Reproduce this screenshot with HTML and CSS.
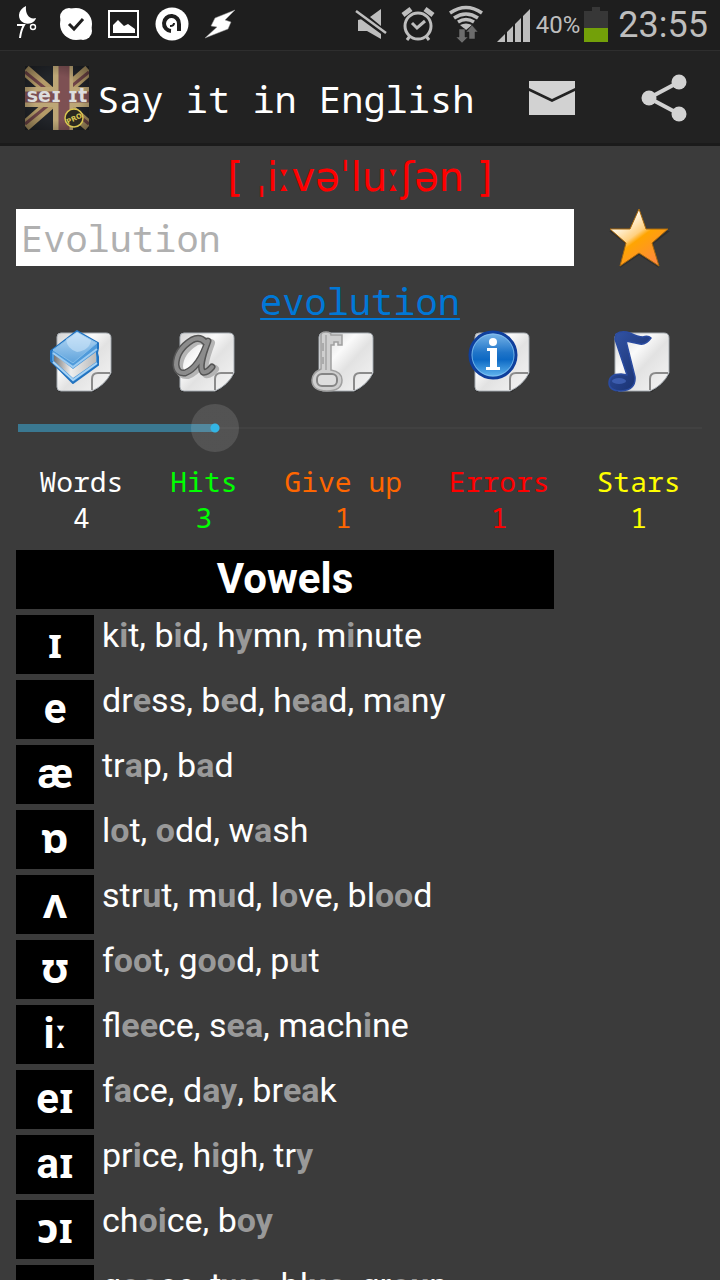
FILE: index.html
```html
<!DOCTYPE html>
<html lang="en">
<head>
    <meta charset="UTF-8">
    <meta name="viewport" content="width=device-width, initial-scale=1.0">
    <title>Say it in English</title>
    <link rel="stylesheet" href="styles.css">
</head>
<body>
    <!-- shared shapes -->
    <svg class="defs" width="0" height="0" aria-hidden="true">
        <defs>
            <linearGradient id="paperFill" x1="0" y1="0" x2="1" y2="1">
                <stop offset="0" stop-color="#d4d4d4"/>
                <stop offset="0.35" stop-color="#fafafa"/>
                <stop offset="0.55" stop-color="#e2e2e2"/>
                <stop offset="1" stop-color="#f6f6f6"/>
            </linearGradient>
            <linearGradient id="starFill" x1="0.2" y1="0.1" x2="0.8" y2="0.9">
                <stop offset="0.1" stop-color="#fffdf5"/>
                <stop offset="0.42" stop-color="#ffd080"/>
                <stop offset="0.52" stop-color="#ffa502"/>
                <stop offset="1" stop-color="#ff8a3c"/>
            </linearGradient>
            <linearGradient id="bookFill" x1="0" y1="0" x2="0" y2="1">
                <stop offset="0" stop-color="#b9daf5"/>
                <stop offset="1" stop-color="#5fa3dc"/>
            </linearGradient>
            <linearGradient id="pagesFill" x1="0" y1="0" x2="1" y2="0">
                <stop offset="0" stop-color="#777"/>
                <stop offset="0.4" stop-color="#eee"/>
                <stop offset="1" stop-color="#bbb"/>
            </linearGradient>
            <linearGradient id="infoFill" x1="0" y1="0" x2="0" y2="1">
                <stop offset="0" stop-color="#7db8ea"/>
                <stop offset="0.45" stop-color="#1f74c8"/>
                <stop offset="0.6" stop-color="#0d69c4"/>
                <stop offset="1" stop-color="#69bcf2"/>
            </linearGradient>
            <linearGradient id="noteFill" x1="0" y1="0" x2="1" y2="1">
                <stop offset="0" stop-color="#3456a8"/>
                <stop offset="1" stop-color="#142a66"/>
            </linearGradient>
            <radialGradient id="flagShade" r="0.7">
                <stop offset="0.5" stop-color="#000" stop-opacity="0"/>
                <stop offset="1" stop-color="#000" stop-opacity="0.4"/>
            </radialGradient>
            <g id="paper">
                <path d="M12 5h46q5 0 5 5v34L45 62H12q-4 0-4-4V9q0-4 4-4z" fill="#222" opacity="0.6"/>
                <path d="M12 3h45q5 0 5 5v35q-6 12-19 18H12q-4 0-4-4V7q0-4 4-4z" fill="url(#paperFill)" stroke="#a9afb5"/>
                <path d="M43 60V49q0-6 6-6h12" fill="none" stroke="#8b8b8b" stroke-width="2"/>
            </g>
        </defs>
    </svg>

    <div class="app">
        <div class="status-bar">
            <svg class="status-icon" viewBox="4 0 48 50">
                <path d="M26 6C17 10 17 20 24 23c6 2 11-1 12-5-6 2-11-3-10-12z" fill="#fff"/>
                <path d="M17 25h7q-3 5-4 13" fill="none" stroke="#fff" stroke-width="2"/>
                <circle cx="33" cy="27" r="2.500" fill="none" stroke="#fff" stroke-width="1.400"/>
            </svg>
            <svg class="status-icon" viewBox="52 0 48 50">
                <g fill="#fff">
                    <circle cx="76" cy="24" r="16"/>
                    <circle cx="69" cy="17" r="9"/>
                    <circle cx="83" cy="31" r="9"/>
                </g>
                <path d="M69 24l5 5 9-10" fill="none" stroke="#1e1e1e" stroke-width="3"/>
            </svg>
            <svg class="status-icon" viewBox="100 0 48 50">
                <rect x="109" y="11" width="29" height="26" fill="none" stroke="#fff" stroke-width="2"/>
                <path d="M113 33v-8l5-5 6 6 4-2 7 5v4z" fill="#fff"/>
            </svg>
            <svg class="status-icon" viewBox="148 0 48 50">
                <circle cx="172" cy="24" r="16.500" fill="#fff"/>
                <path d="M171 31a7.500 7.500 0 1 1 8-7v7" fill="none" stroke="#1e1e1e" stroke-width="4"/>
                <path d="M170 26q4 0 4-3" fill="none" stroke="#1e1e1e" stroke-width="2"/>
            </svg>
            <svg class="status-icon" viewBox="196 0 48 50">
                <path d="M235 10l-20 8-4 8 6 1-12 11 23-9 3-7-6-2z" fill="#fff" stroke="#999" stroke-width="0.500"/>
            </svg>

            <svg class="status-icon push" viewBox="344 0 48 50">
                <path d="M358 20v11h9l14 8V33L362 19zM370 17l11-8v17z" fill="#bebebe"/>
                <path d="M356 11l30 22" stroke="#bebebe" stroke-width="2.500"/>
                <path d="M355 14l30 22" stroke="#1e1e1e" stroke-width="1.500"/>
            </svg>
            <svg class="status-icon" viewBox="392 0 48 50">
                <g fill="none" stroke="#bebebe">
                    <circle cx="418" cy="26" r="13" stroke-width="3"/>
                    <path d="M412 23l5 5 8-7" stroke-width="3"/>
                    <path d="M403 15l8-6M433 15l-8-6" stroke-width="5"/>
                    <path d="M410 36l-3 4M426 36l3 4" stroke-width="3"/>
                </g>
            </svg>
            <svg class="status-icon" viewBox="440 0 48 50">
                <g fill="none" stroke="#bebebe" stroke-width="3.500">
                    <path d="M450 13q16-11 32 0M454 18q12-8 24 0M458 22q8-5 16 0"/>
                </g>
                <path d="M460 25q6-3 12 0l-6 5z" fill="#bebebe"/>
                <path d="M459 29h6v8h3l-6 6-6-6h3zM469 39h6v-7h3l-6-7-6 7h3z" fill="#6c6c6c" stroke="#1e1e1e" stroke-width="0.500"/>
            </svg>
            <svg class="status-icon" viewBox="488 0 48 50">
                <path d="M497 42l8-8v8zM507 42V32l6-6v16zM515 42V24l6-6v24zM523 42V16l7-7v33z" fill="#bebebe"/>
            </svg>
            <span class="battery-text">40%</span>
            <svg class="battery" viewBox="0 0 24 50">
                <path d="M0 11h8V7h8v4h8v17H0z" fill="#373737"/>
                <path d="M0 28h24v14H0z" fill="#73a009"/>
            </svg>
            <span class="clock">23:55</span>
        </div>

        <header class="action-bar">
            <svg class="logo" viewBox="0 0 64 64">
                <rect width="64" height="64" fill="#22252a"/>
                <path d="M0 4L64 60M64 4L0 60" stroke="#b49b68" stroke-width="11"/>
                <path d="M0 6L64 58M64 6L0 58" stroke="#704548" stroke-width="3"/>
                <path d="M38 0v64M0 31h64" stroke="#bda676" stroke-width="20"/>
                <path d="M39 0v64M0 31h64" stroke="#7d5053" stroke-width="11"/>
                <rect width="64" height="64" fill="url(#flagShade)"/>
                <text class="logo-text" x="32" y="36" text-anchor="middle">seɪ ɪt</text>
                <circle cx="49" cy="52" r="9" fill="#2b2920" stroke="#d8c450" stroke-width="1.500"/>
                <text class="logo-pro" x="49" y="55" text-anchor="middle" transform="rotate(-25 49 52)">PRO</text>
            </svg>
            <h1 class="title">Say it in English</h1>
            <button class="action" type="button" aria-label="Send mail">
                <svg width="48" height="48" viewBox="528 74 48 48">
                    <path d="M529 81h46v7l-23 11-23-11zM529 91l23 11 23-11v24h-46z" fill="#d2d2d2"/>
                </svg>
            </button>
            <button class="action" type="button" aria-label="Share">
                <svg width="48" height="48" viewBox="640 74 48 48">
                    <path d="M679 82l-30 16 30 16" fill="none" stroke="#d2d2d2" stroke-width="4"/>
                    <circle cx="679" cy="82" r="7.500" fill="#d2d2d2"/>
                    <circle cx="649" cy="98" r="7.500" fill="#d2d2d2"/>
                    <circle cx="679" cy="114" r="7.500" fill="#d2d2d2"/>
                </svg>
            </button>
        </header>

        <main class="content">
            <div class="phonetic">[ ˌiːvəˈluːʃən ]</div>

            <div class="word-row">
                <input class="word" type="text" placeholder="Evolution" aria-label="Word">
                <button class="star" type="button" aria-label="Star this word">
                    <svg width="64" height="64" viewBox="0 0 64 64">
                        <path d="M32 4l8 21h23L45 39l7 23-20-13-19 13 7-23L2 25h22z" fill="#222" opacity="0.5"/>
                        <path d="M32 3l7 20h22L45 37l7 23-20-13-19 13 6-23L3 23h20z" fill="url(#starFill)" stroke="#a8680c" stroke-linejoin="round"/>
                    </svg>
                </button>
            </div>

            <div class="answer"><a href="#">evolution</a></div>

            <div class="panel">
                <button class="tool" type="button" aria-label="Dictionary">
                    <svg width="64" height="64" viewBox="0 0 64 64">
                        <use href="#paper"/>
                        <path d="M28 1l21 12v5l-1 5 1 4v8L24 53 2 31V21z" fill="#4f9ada" stroke="#2273c0" stroke-width="2" stroke-linejoin="round"/>
                        <path d="M5 24l19 15 23-17v10L24 48 5 31z" fill="url(#pagesFill)"/>
                        <path d="M28 2l20 11-24 20L4 20z" fill="url(#bookFill)" stroke="#84bdea"/>
                        <path d="M4 23l20 14 24-18" fill="none" stroke="#9dccf2" stroke-width="2"/>
                        <path d="M4 32l20 18 24-17" fill="none" stroke="#a9d3f4" stroke-width="2"/>
                        <path d="M17 9l11-7 14 8q-1 10-14 12-10-3-11-13z" fill="#d8ecfb" opacity="0.5"/>
                    </svg>
                </button>
                <button class="tool" type="button" aria-label="Letters">
                    <svg width="64" height="64" viewBox="0 0 64 64">
                        <use href="#paper"/>
                        <!-- script letter, drawn as one brush stroke -->
                        <g fill="none" stroke-linecap="round" stroke-linejoin="round">
                            <path d="M33 12Q28 6 20 10 4 20 4 35q1 9 9 8 14-5 23-32-10 26-5 31 4 1 9-5" stroke="#b5b5b5" stroke-width="8" transform="translate(3 2)"/>
                            <path d="M33 12Q28 6 20 10 4 20 4 35q1 9 9 8 14-5 23-32-10 26-5 31 4 1 9-5" stroke="#555" stroke-width="7"/>
                            <path d="M33 12Q28 6 20 10 4 20 4 35q1 9 9 8 14-5 23-32-10 26-5 31 4 1 9-5" stroke="#8c8c8c" stroke-width="4"/>
                        </g>
                    </svg>
                </button>
                <button class="tool" type="button" aria-label="Key">
                    <svg width="64" height="64" viewBox="0 0 64 64">
                        <use href="#paper"/>
                        <path d="M10 5q0-3 5-3t5 3h11v10h-4v-3h-4v3h-3v25q11 2 11 10 0 11-15 11T1 50q0-7 9-11z" fill="#cfcfcf" stroke="#a0a0a0" stroke-width="1.500"/>
                        <path d="M15 5v35" stroke="#b0b0b0" stroke-width="2"/>
                        <path d="M12 13v8M12 27v7" stroke="#888"/>
                        <rect x="6" y="44" width="20" height="12" rx="5" fill="#dedede" stroke="#858585" stroke-width="2"/>
                    </svg>
                </button>
                <button class="tool" type="button" aria-label="Information">
                    <svg width="64" height="64" viewBox="0 0 64 64">
                        <use href="#paper"/>
                        <circle cx="26" cy="25" r="23" fill="url(#infoFill)" stroke="#0f3f9c" stroke-width="3"/>
                        <circle cx="26" cy="25" r="21" fill="none" stroke="#8dc4f0" opacity="0.7"/>
                        <circle cx="26" cy="12" r="4" fill="#fff"/>
                        <path d="M20 18h10v19h3v3H19v-3h4V21h-3z" fill="#fff"/>
                    </svg>
                </button>
                <button class="tool" type="button" aria-label="Play sound">
                    <svg width="64" height="64" viewBox="0 0 64 64">
                        <use href="#paper"/>
                        <path d="M9 4q6-4 14-1 8 4 13 4 5-2 8 1-5 7-11 6l-14-3 9 36q1 13-14 14-12 0-12-8 0-9 12-9l6 1L8 9z" fill="url(#noteFill)" stroke="#2a4ba0" stroke-width="1.500" stroke-linejoin="round"/>
                        <ellipse cx="12" cy="51" rx="7" ry="3" fill="#4d70c8" opacity="0.6"/>
                    </svg>
                </button>

                <input class="seek" type="range" min="0" max="11" value="3" aria-label="Position">

                <div class="stat words">Words<br>4</div>
                <div class="stat hits">Hits<br>3</div>
                <div class="stat give-up">Give up<br>1</div>
                <div class="stat errors">Errors<br>1</div>
                <div class="stat stars">Stars<br>1</div>
            </div>

            <table class="sounds">
                <thead>
                    <tr><th colspan="2">Vowels</th></tr>
                </thead>
                <tbody>
                    <tr><th>ɪ</th><td>k<b>i</b>t, b<b>i</b>d, h<b>y</b>mn, m<b>i</b>nute</td></tr>
                    <tr><th>e</th><td>dr<b>e</b>ss, b<b>e</b>d, h<b>ea</b>d, m<b>a</b>ny</td></tr>
                    <tr><th>æ</th><td>tr<b>a</b>p, b<b>a</b>d</td></tr>
                    <tr><th>ɒ</th><td>l<b>o</b>t, <b>o</b>dd, w<b>a</b>sh</td></tr>
                    <tr><th>ʌ</th><td>str<b>u</b>t, m<b>u</b>d, l<b>o</b>ve, bl<b>oo</b>d</td></tr>
                    <tr><th>ʊ</th><td>f<b>oo</b>t, g<b>oo</b>d, p<b>u</b>t</td></tr>
                    <tr><th>iː</th><td>fl<b>ee</b>ce, s<b>ea</b>, mach<b>i</b>ne</td></tr>
                    <tr><th>eɪ</th><td>f<b>a</b>ce, d<b>ay</b>, br<b>ea</b>k</td></tr>
                    <tr><th>aɪ</th><td>pr<b>i</b>ce, h<b>i</b>gh, tr<b>y</b></td></tr>
                    <tr><th>ɔɪ</th><td>ch<b>oi</b>ce, b<b>oy</b></td></tr>
                    <tr><th>uː</th><td>g<b>oo</b>se, t<b>wo</b>, bl<b>ue</b>, gr<b>ou</b>p</td></tr>
                </tbody>
            </table>
        </main>
    </div>
</body>
</html>
```
FILE: styles.css
```css
* {
    box-sizing: border-box;
}
body {
    margin: 0;
    background: #3b3b3b;
    color: #fff;
    font-family: Roboto, "Noto Sans", sans-serif;
}
button {
    padding: 0;
    border: none;
    background: none;
    cursor: pointer;
}
svg {
    display: block;
}
.defs {
    position: absolute;
}
.app {
    display: flex;
    flex-direction: column;
    height: 100vh;
    overflow: hidden;
}

/* status bar */
.status-bar {
    display: flex;
    flex: none;
    align-items: center;
    height: 50px;
    padding: 0 12px 0 4px;
    background: #1e1e1e;
    color: #bebebe;
}
.status-icon {
    width: 48px;
    height: 50px;
}
.push {
    margin-left: auto;
}
.battery-text {
    font-size: 24px;
}
.battery {
    width: 24px;
    height: 50px;
    margin: 0 10px 0 4px;
}
.clock {
    font-size: 36px;
    line-height: 48px;
}

/* action bar */
.action-bar {
    display: flex;
    flex: none;
    align-items: center;
    height: 96px;
    padding-left: 25px;
    background: #222;
    border-top: 1px solid #2e2e2e;
    border-bottom: 1px solid #1b1b1b;
    box-shadow: inset 0 -2px #1b1b1b;
}
.logo {
    width: 64px;
    height: 64px;
    margin-right: 8px;
}
.logo-text {
    font: bold 19px "DejaVu Sans", sans-serif;
    fill: #ddd;
}
.logo-pro {
    font: bold 7px "DejaVu Sans", sans-serif;
    fill: #d8c450;
}
.title {
    flex: 1;
    margin: 0;
    font: 37px "Droid Sans Mono", "Noto Sans Mono", "Liberation Mono", monospace;
    white-space: nowrap;
}
.action {
    display: flex;
    justify-content: center;
    width: 112px;
}

/* current word */
.content {
    flex: 1;
    min-height: 0;
    padding: 0 16px;
    overflow: auto;
    scrollbar-width: none;
}
.phonetic {
    color: #f00;
    font: 40px/63px "DejaVu Sans", sans-serif;
    text-align: center;
}
.word-row {
    display: flex;
    height: 57px;
}
.word {
    flex: 1;
    min-width: 0;
    padding: 0 5px;
    border: none;
    border-radius: 0;
    background: #fff;
    font: 37px "Droid Sans Mono", "Noto Sans Mono", "Liberation Mono", monospace;
}
.word::placeholder {
    color: #b0b0b0;
    opacity: 1;
}
.star {
    display: flex;
    align-items: center;
    justify-content: center;
    width: 130px;
}
.answer {
    padding-top: 10px;
    font: 37px/50px "Droid Sans Mono", "Noto Sans Mono", "Liberation Mono", monospace;
    text-align: center;
}
.answer a {
    color: #0078d7;
    text-decoration-thickness: 2px;
    text-underline-offset: 3px;
}

/* tools, slider and counters share five columns */
.panel {
    display: grid;
    grid-template-columns: repeat(5, auto);
    padding-top: 4px;
}
.tool {
    justify-self: center;
    height: 64px;
}
.seek {
    grid-column: 1 / -1;
    min-width: 0;
    height: 48px;
    margin: 10px 2px 11px;
    appearance: none;
    background:
        linear-gradient(#3a7891, #3a7891) left center / calc(24px + (100% - 48px) * 3 / 11) 8px no-repeat,
        linear-gradient(#414141, #414141) center / 100% 2px no-repeat;
}
.seek::-webkit-slider-thumb {
    appearance: none;
    width: 48px;
    height: 48px;
    border-radius: 50%;
    background: radial-gradient(circle, #33b5e5 4px, rgba(255, 255, 255, 0.12) 5px);
}
.stat {
    font: 28px/36px "Droid Sans Mono", "Noto Sans Mono", "Liberation Mono", monospace;
    text-align: center;
    white-space: nowrap;
}
.hits {
    color: #0f0;
}
.give-up {
    color: #f60;
}
.errors {
    color: #f00;
}
.stars {
    color: #ff0;
}

/* sounds table */
.sounds {
    width: 550px;
    margin: 9px -6px 0;
    border-spacing: 6px;
    font-size: 34px;
}
.sounds th {
    width: 78px;
    height: 59px;
    padding: 0 0 2px;
    background: #000;
    font-size: 42px;
    line-height: 57px;
}
.sounds td {
    padding: 0 2px;
    line-height: 40px;
    vertical-align: top;
    white-space: nowrap;
}
.sounds b {
    color: #999;
}
```
